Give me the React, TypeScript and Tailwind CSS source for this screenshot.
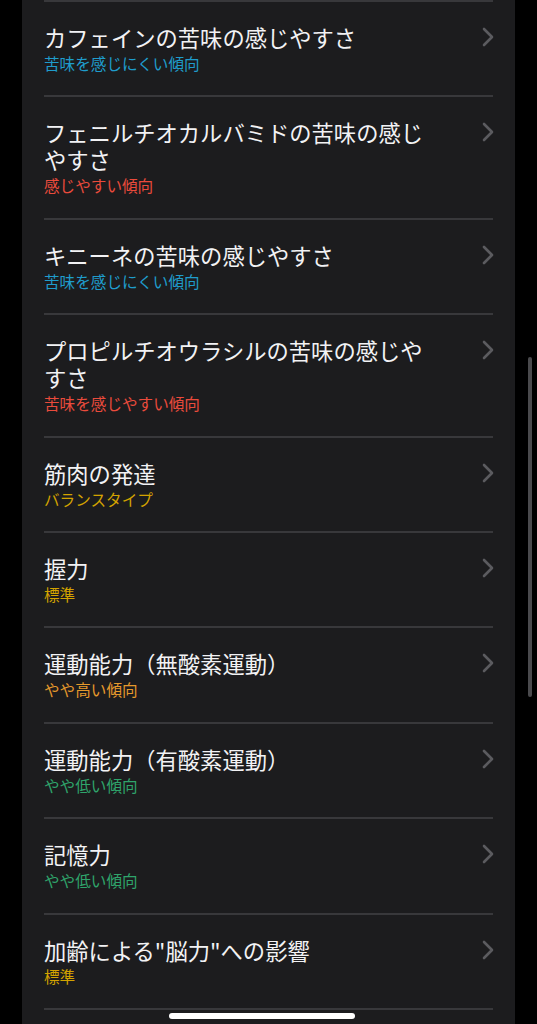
import { Fragment } from "react";

type Tone = "blue" | "red" | "yellow" | "orange" | "green";

interface TraitItem {
  id: string;
  title: string;
  result: string;
  tone: Tone;
}

const toneClass: Record<Tone, string> = {
  blue: "text-[#1f9ccc]",
  red: "text-[#ea4b3c]",
  yellow: "text-[#d3a300]",
  orange: "text-[#e5992c]",
  green: "text-[#2fa46b]",
};

const traits: TraitItem[] = [
  { id: "caffeine", title: "カフェインの苦味の感じやすさ", result: "苦味を感じにくい傾向", tone: "blue" },
  { id: "ptc", title: "フェニルチオカルバミドの苦味の感じやすさ", result: "感じやすい傾向", tone: "red" },
  { id: "quinine", title: "キニーネの苦味の感じやすさ", result: "苦味を感じにくい傾向", tone: "blue" },
  { id: "prop", title: "プロピルチオウラシルの苦味の感じやすさ", result: "苦味を感じやすい傾向", tone: "red" },
  { id: "muscle", title: "筋肉の発達", result: "バランスタイプ", tone: "yellow" },
  { id: "grip", title: "握力", result: "標準", tone: "yellow" },
  { id: "anaerobic", title: "運動能力（無酸素運動）", result: "やや高い傾向", tone: "orange" },
  { id: "aerobic", title: "運動能力（有酸素運動）", result: "やや低い傾向", tone: "green" },
  { id: "memory", title: "記憶力", result: "やや低い傾向", tone: "green" },
  { id: "aging", title: "加齢による\"脳力\"への影響", result: "標準", tone: "yellow" },
];

function Divider() {
  return <div className="h-[2px] w-full bg-[#38383b]" />;
}

function ChevronRight() {
  return (
    <svg width="14" height="22" viewBox="0 0 14 22" fill="none">
      <polyline
        points="3,3 11,11 3,19"
        stroke="#5b5b5f"
        strokeWidth="2.6"
        strokeLinecap="round"
        strokeLinejoin="round"
      />
    </svg>
  );
}

function TraitRow({ item }: { item: TraitItem }) {
  return (
    <div className="flex items-start justify-between pt-[22px] pb-[20.4px]">
      <div className="w-[390px]">
        <p className="text-[22.3px] leading-[27px] text-[#f2f2f4]">{item.title}</p>
        <p className={`text-[15.6px] leading-[24px] ${toneClass[item.tone]}`}>
          {item.result}
        </p>
      </div>
      <div className="mt-[2px] -mr-[2px]">
        <ChevronRight />
      </div>
    </div>
  );
}

function App() {
  return (
    <div
      className="relative h-[1024px] w-[537px] overflow-hidden bg-black"
      style={{ fontFamily: '"Noto Sans CJK JP", "Noto Sans", sans-serif' }}
    >
      <div className="mx-[22px] h-full w-[493px] bg-[#1c1c1e] px-[22px]">
        <Divider />
        {traits.map((item) => (
          <Fragment key={item.id}>
            <TraitRow item={item} />
            <Divider />
          </Fragment>
        ))}
      </div>

      <div className="absolute left-[528px] top-[357px] h-[340px] w-[4px] rounded-full bg-[#4a4a4d]" />
      <div className="absolute left-[169px] top-[1013px] h-[6px] w-[186px] rounded-full bg-white" />
    </div>
  );
}

export default App;
